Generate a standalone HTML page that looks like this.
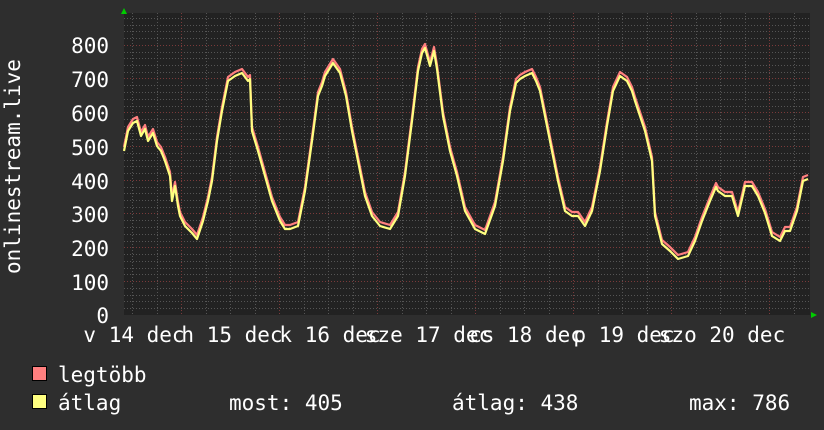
<!DOCTYPE html>
<html><head><meta charset="utf-8"><style>
html,body{margin:0;padding:0;background:#2e2e2e;}
svg{display:block}
text{font-family:"DejaVu Sans Mono","Liberation Mono",monospace;fill:#fff;font-size:21px}
</style></head><body>
<svg width="824" height="430" viewBox="0 0 824 430" xmlns="http://www.w3.org/2000/svg">
<rect width="824" height="430" fill="#2e2e2e"/>
<rect x="124" y="13" width="686" height="302" fill="#222"/>
<g stroke="#555" stroke-width="1" stroke-dasharray="1,2">
<path d="M124 18.5H810M124 25.5H810M124 31.5H810M124 38.5H810M124 52.5H810M124 58.5H810M124 65.5H810M124 72.5H810M124 85.5H810M124 92.5H810M124 99.5H810M124 106.5H810M124 119.5H810M124 126.5H810M124 133.5H810M124 139.5H810M124 153.5H810M124 160.5H810M124 166.5H810M124 173.5H810M124 187.5H810M124 193.5H810M124 200.5H810M124 207.5H810M124 220.5H810M124 227.5H810M124 234.5H810M124 241.5H810M124 254.5H810M124 261.5H810M124 268.5H810M124 274.5H810M124 288.5H810M124 295.5H810M124 301.5H810M124 308.5H810"/>
<path d="M132.5 13V315M157.5 13V315M206.5 13V315M230.5 13V315M255.5 13V315M304.5 13V315M328.5 13V315M353.5 13V315M402.5 13V315M426.5 13V315M451.5 13V315M500.5 13V315M524.5 13V315M549.5 13V315M598.5 13V315M622.5 13V315M647.5 13V315M696.5 13V315M720.5 13V315M745.5 13V315M794.5 13V315"/>
</g>
<g stroke="#7a3a3a" stroke-width="1" stroke-dasharray="1,2">
<path d="M124 45.5H810M124 78.5H810M124 112.5H810M124 146.5H810M124 180.5H810M124 213.5H810M124 247.5H810M124 281.5H810"/>
<path d="M181.5 13V315M279.5 13V315M377.5 13V315M475.5 13V315M573.5 13V315M671.5 13V315M769.5 13V315"/>
</g>
<defs>
<polyline id="d" points="124,150 128,130 133,122 137,120 141,135 145,128 148,140 153,132 157,145 161,150 165,160 170,175 172,200 175,185 178,205 180,215 185,225 192,232 197,238 203,220 208,200 212,180 217,140 222,110 226,90 228,80 235,75 242,72 248,80 250,78 252,130 258,150 265,175 272,200 280,220 285,228 290,228 298,225 302,205 305,190 312,140 318,95 322,85 325,75 333,62 340,72 346,95 352,130 358,160 365,195 372,215 380,225 390,228 398,215 405,175 412,120 418,70 422,52 425,47 430,65 434,50 437,68 443,115 450,150 457,175 465,210 475,228 485,233 495,205 503,160 510,110 516,82 520,78 525,75 532,72 536,80 540,90 546,120 552,150 558,180 565,210 572,215 578,215 585,225 592,210 600,170 607,125 613,90 620,75 627,80 632,90 635,100 645,130 652,160 655,215 662,243 670,250 678,258 688,255 695,240 702,220 710,200 716,186 718,190 725,195 732,195 738,215 745,185 752,185 758,195 765,212 772,235 780,240 785,230 790,230 797,210 803,180 808,178"/>
</defs>
<g fill="none" stroke-width="2.2" stroke-linejoin="round">
<use href="#d" stroke="#ff7f7f" transform="translate(0,-3)"/>
<use href="#d" stroke="#ffff80" transform="translate(0,1)"/>
</g>
<polygon points="121,14 127,14 124,8" fill="#0c0"/>
<polygon points="811,312 811,318 817,315" fill="#0c0"/>
<g text-anchor="end">
<text x="109" y="53">800</text><text x="109" y="87">700</text><text x="109" y="121">600</text><text x="109" y="155">500</text><text x="109" y="189">400</text><text x="109" y="222">300</text><text x="109" y="256">200</text><text x="109" y="290">100</text><text x="109" y="323">0</text>
</g>
<g text-anchor="middle">
<text x="134" y="342">v 14 dec</text>
<text x="232" y="342">h 15 dec</text>
<text x="330" y="342">k 16 dec</text>
<text x="428" y="342">sze 17 dec</text>
<text x="526" y="342">cs 18 dec</text>
<text x="624" y="342">p 19 dec</text>
<text x="722" y="342">szo 20 dec</text>
</g>
<text transform="translate(20,274) rotate(-90)" x="0" y="0">onlinestream.live</text>
<rect x="32.5" y="366.5" width="14" height="14" fill="#ff7f7f" stroke="#000"/>
<rect x="32.5" y="394.5" width="14" height="14" fill="#ffff80" stroke="#000"/>
<text x="58" y="382">legtöbb</text>
<text x="58" y="410">átlag</text>
<text x="229" y="410">most: 405</text>
<text x="452" y="410">átlag: 438</text>
<text x="689" y="410">max: 786</text>
</svg>
</body></html>
